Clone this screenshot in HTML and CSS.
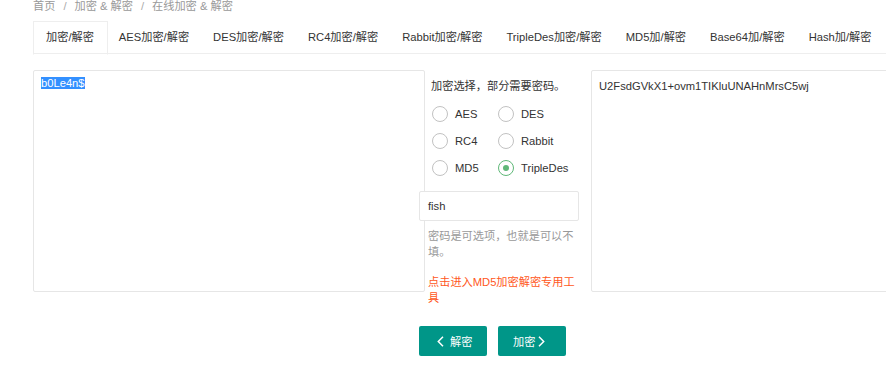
FILE: index.html
```html
<!DOCTYPE html>
<html lang="zh-CN">
<head>
<meta charset="utf-8">
<title>在线加密 &amp; 解密</title>
<link rel="stylesheet" href="styles.css">
</head>
<body>
<div class="page">
  <div class="breadcrumb">
    <a class="crumb">首页</a><span class="sep">/</span><a class="crumb">加密 &amp; 解密</a><span class="sep">/</span><span class="crumb">在线加密 &amp; 解密</span>
  </div>
  <ul class="tabs">
    <li class="tab active">加密/解密</li>
    <li class="tab">AES加密/解密</li>
    <li class="tab">DES加密/解密</li>
    <li class="tab">RC4加密/解密</li>
    <li class="tab">Rabbit加密/解密</li>
    <li class="tab">TripleDes加密/解密</li>
    <li class="tab">MD5加/解密</li>
    <li class="tab">Base64加/解密</li>
    <li class="tab">Hash加/解密</li>
  </ul>
  <div class="work">
    <div class="textbox left"><span class="sel">b0Le4n$</span></div>
    <div class="middle">
      <div class="title">加密选择，部分需要密码。</div>
      <div class="radios">
        <label class="radio"><span class="ring"></span><span class="rlabel">AES</span></label>
        <label class="radio"><span class="ring"></span><span class="rlabel">DES</span></label>
        <label class="radio"><span class="ring"></span><span class="rlabel">RC4</span></label>
        <label class="radio"><span class="ring"></span><span class="rlabel">Rabbit</span></label>
        <label class="radio"><span class="ring"></span><span class="rlabel">MD5</span></label>
        <label class="radio checked"><span class="ring"></span><span class="rlabel">TripleDes</span></label>
      </div>
      <div class="pwd">fish</div>
      <p class="help">密码是可选项，也就是可以不填。</p>
      <p class="link">点击进入MD5加密解密专用工具</p>
    </div>
    <div class="textbox right">U2FsdGVkX1+ovm1TIKluUNAHnMrsC5wj</div>
  </div>
  <div class="actions">
    <button class="btn"><svg class="chev" width="7" height="11" viewBox="0 0 7 11"><path d="M6 0.8 L1.3 5.5 L6 10.2" fill="none" stroke="#fff" stroke-width="1.5"/></svg><span class="btn-left-text">解密</span></button>
    <button class="btn btn-enc"><span>加密</span><svg class="chev" width="7" height="11" viewBox="0 0 7 11"><path d="M1 0.8 L5.7 5.5 L1 10.2" fill="none" stroke="#fff" stroke-width="1.5"/></svg></button>
  </div>
</div>
</body>
</html>
```
FILE: styles.css
```css
html, body {
  margin: 0;
  padding: 0;
  background: #fff;
  overflow: hidden;
}
body {
  font-family: "Liberation Sans", "Noto Sans CJK SC", sans-serif;
  font-size: 11.2px;
  color: #333;
}
.page {
  padding-left: 33px;
  width: 853px;
  overflow: hidden;
}
.breadcrumb {
  height: 12px;
  line-height: 12px;
  color: #999;
  white-space: nowrap;
}
.crumb { color: #999; }
.sep {
  margin: 0 8px;
  color: #aaa;
}
.tabs {
  list-style: none;
  margin: 9px 0 0 0;
  padding: 0;
  display: flex;
  height: 32px;
  border-bottom: 1px solid #eee;
}
.tab {
  position: relative;
  padding: 0 12px;
  line-height: 32px;
  white-space: nowrap;
  color: #333;
}
.tab.active {
  padding: 0 13px;
}
.tab.active::after {
  content: "";
  position: absolute;
  left: 0;
  right: -1px;
  top: 0;
  height: 32px;
  border: 1px solid #eee;
  border-bottom-color: #fff;
  box-sizing: content-box;
  pointer-events: none;
}
.work {
  display: flex;
  align-items: flex-start;
  margin-top: 16px;
}
.textbox {
  box-sizing: border-box;
  height: 222px;
  border: 1px solid #e6e6e6;
  border-radius: 2px;
  line-height: 16px;
  color: #333;
}
.left {
  width: 392px;
  flex: none;
  padding: 4px 7px;
}
.right {
  width: 400px;
  flex: none;
  padding: 7px 7px;
}
.sel {
  background: #3390ff;
  color: #fff;
}
.middle {
  width: 166px;
  flex: none;
  padding-left: 6px;
  box-sizing: border-box;
}
.title {
  margin-top: 8px;
  line-height: 16px;
  white-space: nowrap;
}
.radios {
  margin-top: 6px;
  padding-left: 1px;
  display: grid;
  grid-template-columns: 66px auto;
  grid-auto-rows: 27px;
}
.radio {
  display: flex;
  align-items: center;
}
.ring {
  box-sizing: border-box;
  width: 16px;
  height: 16px;
  border: 1px solid #c2c2c2;
  border-radius: 50%;
  display: flex;
  align-items: center;
  justify-content: center;
}
.checked .ring { border-color: #5fb878; }
.checked .ring::after {
  content: "";
  width: 6px;
  height: 6px;
  border-radius: 50%;
  background: #5fb878;
}
.rlabel {
  margin-left: 7px;
  color: #333;
}
.pwd {
  box-sizing: border-box;
  margin: 10px 0 0 -12px;
  width: 160px;
  height: 30px;
  line-height: 28px;
  padding-left: 8px;
  border: 1px solid #e6e6e6;
  border-radius: 2px;
  background: #fff;
  position: relative;
  color: #333;
}
.help, .link {
  margin: 0 0 0 -3px;
  width: 151px;
  line-height: 16px;
}
.help {
  margin-top: 7px;
  color: #999;
}
.link {
  margin-top: 14px;
  color: #ff5722;
}
.actions {
  display: flex;
  gap: 11px;
  margin-top: 20px;
  padding-left: 386px;
}
.btn {
  box-sizing: border-box;
  height: 30px;
  border: none;
  border-radius: 2px;
  background: #009688;
  color: #fff;
  font-family: inherit;
  font-size: 11.2px;
  display: flex;
  align-items: center;
  padding: 0 14px 0 18px;
  width: 68px;
  cursor: pointer;
}
.btn .chev { display: block; }
.btn-left-text { margin-left: 6px; }
.btn-enc { padding: 0 0 0 15px; }
.btn-enc .chev { margin-left: 3px; }
```
